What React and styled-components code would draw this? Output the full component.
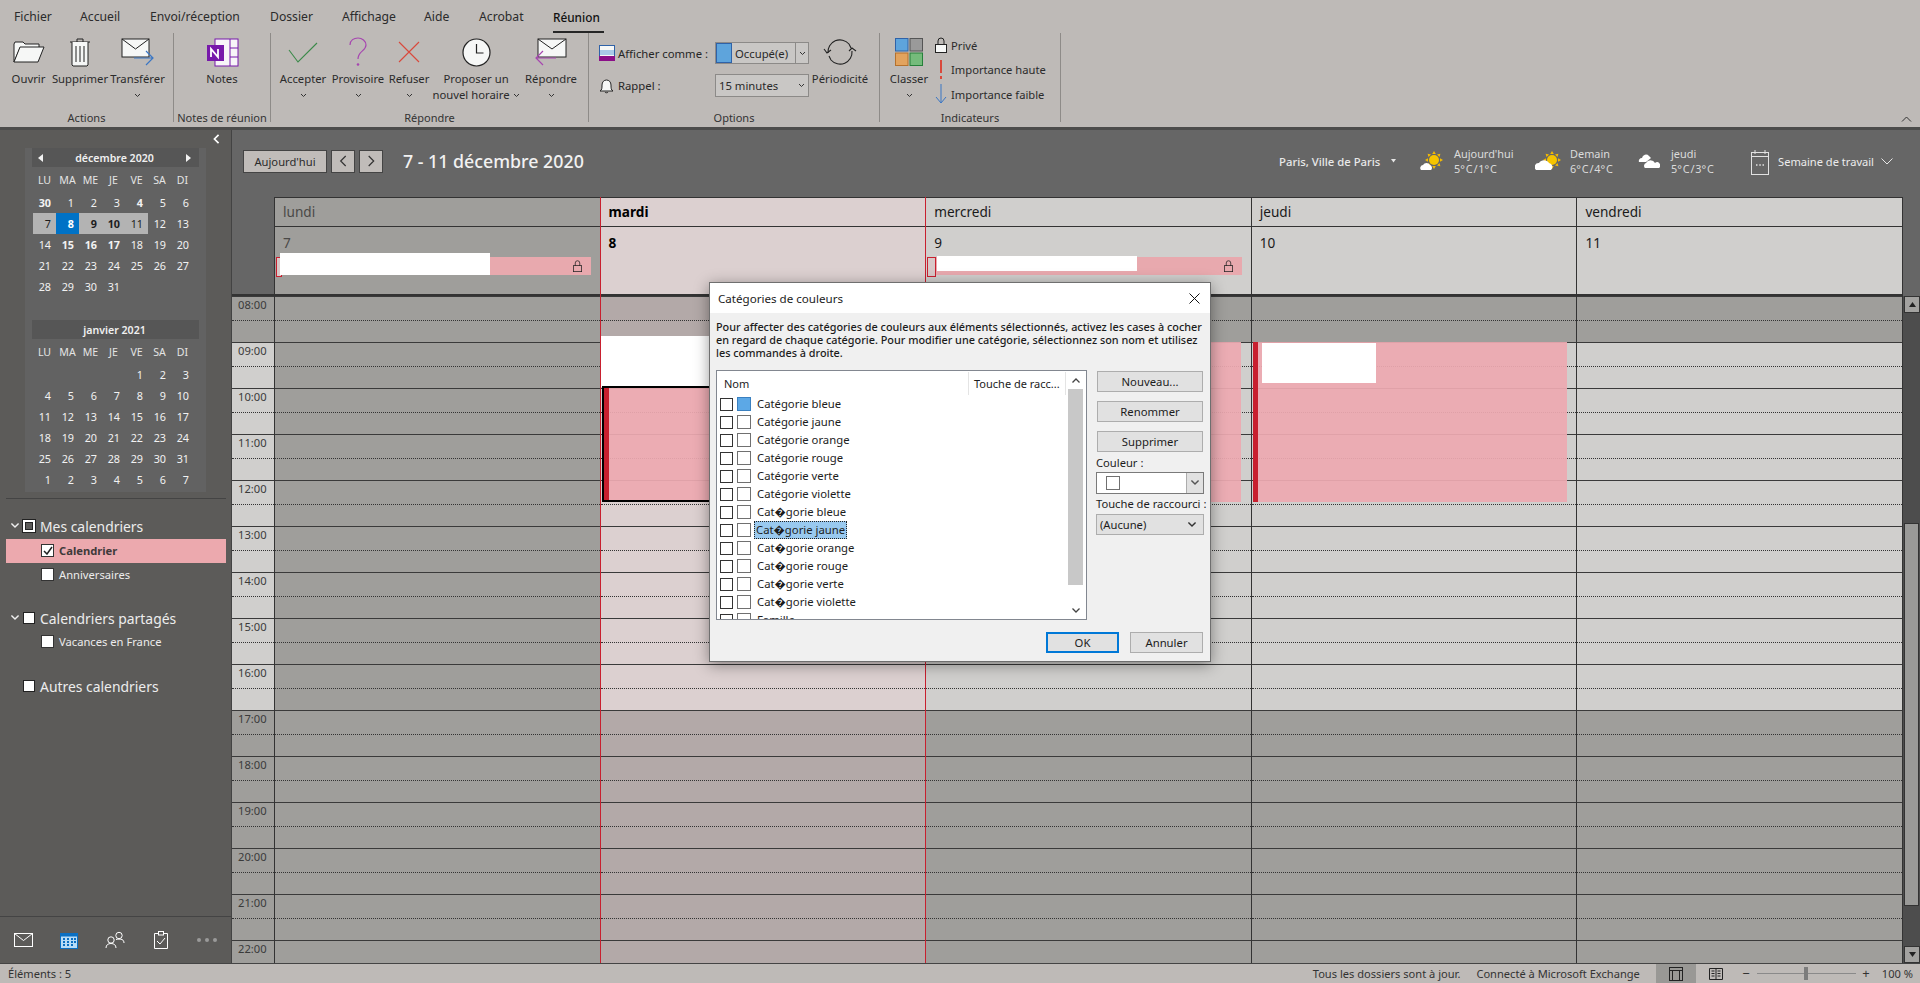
import React from 'react';
import styled, { createGlobalStyle } from 'styled-components';

const Global = createGlobalStyle`
  html, body { margin: 0; padding: 0; height: 100%; overflow: hidden; }
  body { font-family: "Noto Sans", "DejaVu Sans", sans-serif; font-size: 12px; color: #262626; }
  * { box-sizing: border-box; }
  svg { display: block; flex: none; }
`;

const Page = styled.div`position: relative; width: 1920px; height: 983px; display: flex; flex-direction: column; overflow: hidden;`;

/* ---------- ribbon ---------- */
const Ribbon = styled.header`position: relative; height: 130px; flex: none; background: #bebab7; border-bottom: 3px solid #4c4c4b;`;
const TabBar = styled.nav`height: 33px; display: flex; padding-left: 14px;`;
const Tab = styled.div`
  width: ${p => p.$w}px; height: 33px; line-height: 34px; font-size: 12.2px; white-space: nowrap; color: #2b2b2b;
  ${p => p.$active && `
    flex: none; width: 51px; color: #111; font-weight: 500; font-size: 11.8px; border-bottom: 2px solid #262626;
  `}
`;
const Groups = styled.div`display: flex; height: 89px;`;
const Group = styled.section`
  width: ${p => p.$w}px; height: 89px; flex: none; display: flex; flex-direction: column; border-right: 1px solid #8e8b88;
`;
const GroupBody = styled.div`flex: 1; display: flex; padding-left: ${p => p.$pad || 0}px; min-height: 0;`;
const GroupLabel = styled.div`height: 14px; line-height: 14px; margin-bottom: -3px; text-align: center; font-size: 11px; color: #333; white-space: nowrap;`;
const RibbonButton = styled.div`
  width: ${p => p.$w}px; flex: none; display: flex; flex-direction: column; align-items: center; padding-top: 3px; font-size: 11.3px; line-height: 16px; white-space: nowrap; color: #2b2b2b;
`;
const IconSlot = styled.div`height: 32px; margin-bottom: 3px; display: flex; align-items: center; justify-content: center;`;
const Caret = styled.div`height: 16px; display: flex; align-items: center; justify-content: center;`;
const InlineCaret = styled.span`display: inline-block; vertical-align: 1px; margin-left: 3px;`;
const OptionsGrid = styled.div`
  display: grid; grid-template-columns: 19px 97px 94px; grid-template-rows: 22px 23px; row-gap: 10px; padding: 9px 0 0 10px; align-items: center; font-size: 11.3px; white-space: nowrap;
`;
const RibbonSelect = styled.div`
  height: ${p => p.$h || 22}px; display: flex; align-items: center; border: 1px solid #8c8a88; background: #c9c7c5; font-size: 11.3px; color: #2a2a2a; padding-right: 3px;
`;
const Swatch = styled.span`width: 16px; height: 20px; background: #5ea4dc; border: 1px solid #2f62a8; flex: none; margin-right: 3px;`;
const SelectArrowCell = styled.span`margin-left: auto; height: 100%; width: 13px; display: flex; align-items: center; justify-content: center; border-left: 1px solid #8c8a88; margin-right: -3px;`;
const SelectArrow = styled.span`margin-left: auto;`;
const PadText = styled.span`padding-left: 3px;`;
const IndicatorList = styled.div`display: flex; flex-direction: column; margin-left: 3px;`;
const IndicatorRow = styled.div`height: 24.5px; display: flex; align-items: center; font-size: 11.2px; white-space: nowrap; color: #2b2b2b;`;
const IndicatorIcon = styled.span`width: 16px; display: flex; justify-content: flex-start;`;
const RibbonCollapse = styled.div`position: absolute; right: 8px; top: 116px;`;

/* ---------- layout ---------- */
const Main = styled.div`flex: 1; display: flex; min-height: 0;`;
const Sidebar = styled.aside`width: 232px; flex: none; display: flex; flex-direction: column; background: #5c5b59; border-right: 1px solid #434343;`;
const Collapse = styled.div`height: 18px; display: flex; justify-content: flex-end; align-items: center; padding-right: 11px;`;
const MiniPanel = styled.div`margin: 0 25px; width: 181px; height: 344px; padding: 0 7px; background: #626262; flex: none;`;
const MonthHead = styled.div`
  height: 19px; margin-top: ${p => p.$mt || 0}px; display: flex; align-items: center; justify-content: space-between; padding: 0 8px 0 6px; background: #565656; color: #f0f0f0; font-weight: 600; font-size: 10.6px;
`;
const MonthName = styled.span`flex: 1; text-align: center;`;
const WeekHead = styled.div`display: grid; grid-template-columns: repeat(7, 23px); height: 25px; align-items: center; margin-left: 1px; color: #e4e4e4; font-size: 10.6px;`;
const WeekHeadCell = styled.span`text-align: center;`;
const DayGrid = styled.div`display: grid; grid-template-columns: repeat(7, 23px); grid-auto-rows: 21px; margin-left: 1px;`;
const Day = styled.span`
  height: 21px; line-height: 21px; text-align: right; padding-right: 5px; font-size: 10.8px; color: #f2f2f2;
  font-weight: ${p => (p.$bold ? 700 : 400)};
  ${p => p.$tone === 'range' && 'background: #b3b3b3; color: #1d1d1d;'}
  ${p => p.$tone === 'today' && 'background: #0072c6; color: #fff;'}
`;
const Divider = styled.div`height: 1px; margin: 6px 6px 0; width: 220px; background: #444; flex: none;`;
const FolderHead = styled.div`
  height: 24px; margin-top: ${p => p.$mt || 0}px; display: flex; align-items: center; color: #ededed; font-size: 13.9px; padding-left: ${p => p.$pl || 10}px; flex: none; white-space: nowrap;
`;
const ChevronBox = styled.span`width: 13px; display: flex;`;
const FolderCheck = styled.span`
  width: 12px; height: 12px; flex: none; margin-right: 5px; background: #fff; border: 1px solid #222;
  ${p => p.$boxed && 'background: #5c5b59; border: 2px solid #fff; box-shadow: 0 0 0 1px #222, inset 0 0 0 1px #222;'}
`;
const CalRow = styled.div`
  height: 24px; margin: 0 6px; width: 220px; flex: none; padding: 0 0 1px 35px; display: flex; align-items: center; gap: 5px; font-size: 11.2px; white-space: nowrap;
  color: ${p => (p.$active ? '#3f3a3a' : '#ececec')}; font-weight: ${p => (p.$active ? 700 : 400)};
  background: ${p => (p.$active ? '#eca9ae' : 'transparent')};
  ${p => p.$active && 'margin-top: 1px;'}
`;
const CalCheck = styled.span`width: 13px; height: 13px; flex: none; background: #fff; border: 1px solid #333; display: flex; align-items: center; justify-content: center;`;
const BottomNav = styled.div`margin-top: auto; height: 47px; flex: none; border-top: 1px solid #444; display: grid; grid-template-columns: 46px 46px 46px 46px 46px; padding-bottom: 1px; align-items: center; justify-items: center;`;

/* ---------- content ---------- */
const Content = styled.main`flex: 1; min-width: 0; display: flex; flex-direction: column; background: #666;`;
const Toolbar = styled.div`height: 67px; flex: none; display: flex; align-items: center; padding: 0 27px 5px 11px;`;
const ToolBtn = styled.div`
  width: ${p => p.$w}px; height: 23px; margin-right: 4px; display: flex; align-items: center; justify-content: center; background: #c0bcb9; border: 1px solid #444; font-size: 11.2px; color: #2b2b2b;
`;
const Title = styled.h1`margin: 0 0 0 16px; font-size: 17.8px; font-weight: 500; color: #f2f2f2; white-space: nowrap;`;
const ToolRight = styled.div`margin-left: auto; display: flex; align-items: center; color: #e2e2e2;`;
const Location = styled.div`width: 141px; display: flex; align-items: center; gap: 11px; font-size: 11.3px; font-weight: 500; white-space: nowrap; color: #e9e9e9;`;
const Forecast = styled.div`width: ${p => p.$w}px; display: flex; align-items: center; gap: ${p => p.$gap}px;`;
const ForecastText = styled.div`display: flex; flex-direction: column; font-size: 10.9px; line-height: 15px; white-space: nowrap; color: #dcdcdc; word-spacing: -2px;`;
const ViewSwitch = styled.div`display: flex; align-items: center; gap: 9px; font-size: 11.1px; white-space: nowrap; color: #ececec;`;
const ViewChevron = styled.span`margin-left: -2px;`;

const Board = styled.div`flex: 1; display: flex; min-height: 0;`;
const Week = styled.div`flex: 1; min-width: 0; display: grid; grid-template-columns: 43px repeat(5, 1fr); overflow: hidden;`;
const TimeCol = styled.div`display: flex; flex-direction: column; border-right: 1px solid #333;`;
const TimeHead = styled.div`height: 99px; flex: none; border-bottom: 2px solid #333;`;
const DayCol = styled.div`
  position: relative; display: flex; flex-direction: column; min-width: 0;
  border-right: 1px solid ${p => (p.$redEdge ? '#c8202f' : '#333')};
`;
const WeekdayCell = styled.div`
  height: 30px; flex: none; padding-left: 8px; line-height: 28px; font-size: 13.6px;
  border-top: 1px solid #333; border-bottom: 1px solid #333;
  background: ${p => p.$bg}; color: ${p => p.$fg}; font-weight: ${p => (p.$today ? 700 : 400)};
`;
const DateCell = styled.div`
  height: 69px; flex: none; padding: 6px 0 0 8px; line-height: 20px; font-size: 13.6px;
  border-bottom: 2px solid #333;
  background: ${p => p.$bg}; color: ${p => p.$fg}; font-weight: ${p => (p.$today ? 700 : 400)};
`;
const Slot = styled.div`
  position: relative; height: 46px; flex: none; background: ${p => p.$bg};
  &:not(:first-of-type) { border-top: 1px solid #3a3a3a; }
  &::after { content: ''; position: absolute; left: 0; right: 0; top: 23px; border-top: 1px dotted #333; }
`;
const HourLabel = styled.span`position: relative; display: block; padding-left: 6px; line-height: 16px; font-size: 11.2px; color: #3a3a3a;`;
const AllDay = styled.div`
  position: absolute; left: 1px; top: 60px; width: 315px; height: 18px; background: #e8a9ae;
  &::before { content: ''; position: absolute; left: 0; top: 0; width: ${p => p.$mark}px; height: 18px; border: 1px solid #c8202f; background: #d8c8c8; }
`;
const LockSpot = styled.span`position: absolute; right: 8px; top: 3px;`;
const Redact = styled.div`
  position: absolute; left: ${p => p.$l}px; top: ${p => p.$t}px; width: ${p => p.$w}px; height: ${p => p.$h}px; background: #fff;
`;
const TimedEvent = styled.div`
  position: absolute; left: 1px; top: ${p => p.$t}px; width: ${p => p.$w}px; height: ${p => p.$h}px; background: rgba(237, 169, 176, .93);
  ${p => p.$sel && 'border: 2px solid #000;'}
  &::before { content: ''; position: absolute; left: 0; top: 0; bottom: 0; width: 5px; background: #c8202f; }
`;
const Scroll = styled.div`width: 17px; flex: none; margin-top: 99px; padding-left: 1px; background: #4d4d4d; display: flex; flex-direction: column;`;
const ScrollBtn = styled.div`width: 16px; height: 17px; flex: none; background: #a3a2a0; border: 1px solid #333; display: flex; align-items: center; justify-content: center; ${p => p.$end && 'margin-top: auto;'}`;
const ScrollThumb = styled.div`height: 383px; flex: none; margin-top: 210px; width: 15px; background: #9a9a98; border: 1px solid #333;`;

/* ---------- status bar ---------- */
const Status = styled.footer`height: 20px; flex: none; background: #bebab7; border-top: 1px solid #444; display: flex; align-items: center; padding: 0 7px 0 8px; font-size: 11.1px; color: #333; white-space: nowrap;`;
const StatusRight = styled.div`margin-left: auto; display: flex; align-items: center; height: 100%;`;
const StatusText = styled.span`margin-right: 16px;`;
const ViewBtn = styled.span`width: 40px; height: 100%; display: flex; align-items: center; justify-content: center; background: ${p => (p.$on ? '#999895' : 'transparent')}; margin-right: ${p => p.$mr || 0}px;`;
const ZoomSlider = styled.div`position: relative; width: 99px; height: 1px; margin: 0 4px 0 5px; background: #8a8a8a;
  &::after { content: ''; position: absolute; left: 47px; top: -6px; width: 4px; height: 13px; background: #7c7c7c; }
`;
const ZoomSign = styled.span`width: 12px; font-size: 13px; text-align: center; line-height: 13px;`;
const ZoomText = styled.span`margin-left: 10px;`;

/* ---------- dialog ---------- */
const Dialog = styled.div`
  position: absolute; left: 709px; top: 282px; width: 502px; height: 380px; background: #f0f0f0; border: 1px solid #6f6f6f; box-shadow: 0 3px 14px rgba(0,0,0,.4); display: flex; flex-direction: column; font-size: 11.4px; color: #1c1c1c;
`;
const DialogTitle = styled.div`height: 30px; flex: none; background: #fff; display: flex; align-items: center; justify-content: space-between; padding: 0 10px 0 8px; font-size: 11.6px;`;
const DialogText = styled.p`margin: 7px 0 0; padding: 0 6px; line-height: 13px; height: 39px; font-size: 10.85px; font-weight: 500; white-space: pre-line; flex: none;`;
const DialogBody = styled.div`display: flex; margin-top: 11px; padding-left: 6px; flex: none;`;
const ListBox = styled.div`width: 371px; height: 250px; background: #fff; border: 1px solid #828790; display: flex; overflow: hidden; flex: none;`;
const ListMain = styled.div`flex: 1; min-width: 0; display: flex; flex-direction: column;`;
const ListHead = styled.div`height: 24px; flex: none; padding-top: 1px; display: grid; grid-template-columns: 251px 1fr; align-items: center; font-size: 11px;`;
const HeadCell = styled.span`padding-left: 7px; height: 23px; line-height: 23px; white-space: nowrap; ${p => p.$sep && 'border-left: 1px solid #e4e4e4; border-right: 1px solid #e4e4e4; padding-left: 5px;'}`;
const CatRow = styled.div`height: 18px; flex: none; display: flex; align-items: center; padding-left: 3px; font-size: 11.3px; white-space: nowrap;`;
const CatCheck = styled.span`width: 13px; height: 13px; flex: none; border: 1px solid #333; background: #fff; margin-right: 4px;`;
const CatSwatch = styled.span`width: 14px; height: 14px; flex: none; margin-right: 4px; border: 1px solid ${p => (p.$blue ? '#3a80c0' : '#707070')}; background: ${p => (p.$blue ? '#5ca8e6' : '#fff')};`;
const CatName = styled.span`height: 18px; line-height: 16px; padding: 0 1px; ${p => p.$sel ? 'background: #99c9ef; border: 1px dotted #222; margin-left: -1px;' : 'border: 1px solid transparent;'}`;
const ListScroll = styled.div`width: 17px; flex: none; margin-left: 1px; background: #fff; display: flex; flex-direction: column; align-items: center; margin-right: 2px;`;
const ArrowCell = styled.span`height: 18px; flex: none; display: flex; align-items: center; justify-content: center; ${p => p.$end && 'margin-top: auto;'}`;
const ListThumb = styled.span`height: 196px; width: 15px; background: #c8c8c8; flex: none;`;
const SideCol = styled.div`width: 108px; margin-left: 10px; display: flex; flex-direction: column; flex: none; padding-top: 1px;`;
const DlgBtn = styled.div`
  width: ${p => p.$w || 106}px; height: 21px; flex: none; margin-bottom: ${p => p.$mb || 0}px; display: flex; align-items: center; justify-content: center; background: #e1e1e1; border: ${p => (p.$primary ? '2px solid #0078d7' : '1px solid #adadad')}; font-size: 11.3px;
`;
const FieldLabel = styled.div`height: 13px; line-height: 13px; margin: ${p => p.$m}; font-size: 11.2px; white-space: nowrap;`;
const ColorSelect = styled.div`height: 22px; width: 108px; flex: none; margin-left: -1px; border: 1px solid #7a7a7a; background: #fff; display: flex; align-items: center; padding-left: 9px;`;
const ColorChip = styled.span`width: 14px; height: 14px; border: 1px solid #707070; background: #fff;`;
const ColorArrow = styled.span`margin-left: auto; width: 17px; height: 100%; background: #e1e1e1; border-left: 1px solid #adadad; display: flex; align-items: center; justify-content: center;`;
const KeySelect = styled.div`height: 21px; width: 108px; flex: none; margin-left: -1px; border: 1px solid #adadad; background: #e1e1e1; display: flex; align-items: center; justify-content: space-between; padding: 0 6px 0 3px; font-size: 11.2px;`;
const DialogFooter = styled.div`display: flex; justify-content: flex-end; gap: 11px; margin-top: 12px; padding-right: 7px; flex: none;`;

/* ---------- icons ---------- */
const Chev = ({ c = '#333', w = 7 }) => <svg width={w} height={(w * 5) / 7} viewBox="0 0 7 5"><path d="M1 1l2.500 2.500L6 1" fill="none" stroke={c} strokeWidth="1" /></svg>;
const Folder = () => <svg width="32" height="22" viewBox="0 0 32 22"><path d="M1 21V3l1-2h8l2 2h14v4H7L1 21z" fill="#f6f7f6" stroke="#222" /><path d="M1 21L7 6h24l-6 15z" fill="#f6f7f6" stroke="#222" /></svg>;
const Trash = () => <svg width="22" height="30" viewBox="0 0 22 30"><path d="M1 5h20M8 5V2h6v3" fill="none" stroke="#222" /><path d="M3 5v23l1 1h14l1-1V5" fill="#f6f7f6" stroke="#222" /><path d="M7 9v16M11 9v16M15 9v16" stroke="#222" /></svg>;
const MailOut = () => <svg width="34" height="28" viewBox="0 0 34 28"><rect x="1" y="1" width="27" height="18" fill="#f6f7f6" stroke="#222" /><path d="M1 1l13.500 10L28 1" fill="none" stroke="#222" /><path d="M13 20h19M25 13l7 7-7 7" fill="none" stroke="#3a76c4" strokeWidth="1.200" /></svg>;
const OneNote = () => <svg width="33" height="29" viewBox="0 0 33 29"><rect x="9" y="1" width="23" height="27" fill="#f7f5f8" stroke="#7719aa" /><path d="M24 1v27M24 10h8M24 19h8" stroke="#7719aa" /><rect x="1" y="7" width="17" height="16" fill="#7719aa" /><path d="M5 19v-8l7 8v-8" fill="none" stroke="#fff" strokeWidth="1.800" /></svg>;
const Check = () => <svg width="30" height="21" viewBox="0 0 30 21"><path d="M1 8l9 12L29 1" fill="none" stroke="#3b8a4a" strokeWidth="1.100" /></svg>;
const Question = () => <svg width="18" height="30" viewBox="0 0 18 30"><path d="M1 8C1 3 5 1 9 1s8 3 8 7c0 6-8 6-8 14" fill="none" stroke="#a646b0" strokeWidth="1.200" /><circle cx="9" cy="27.500" r="1.300" fill="#a646b0" /></svg>;
const Cross = () => <svg width="22" height="22" viewBox="0 0 22 22"><path d="M1 1l20 20M21 1L1 21" stroke="#d9483b" strokeWidth="1.100" /></svg>;
const Clock = () => <svg width="29" height="29" viewBox="0 0 29 29"><circle cx="14.500" cy="14.500" r="13.500" fill="#f6f7f6" stroke="#222" strokeWidth="1.200" /><path d="M14.500 6v9h7" fill="none" stroke="#222" strokeWidth="1.200" /></svg>;
const MailReply = () => <svg width="32" height="28" viewBox="0 0 32 28"><rect x="3" y="1" width="28" height="18" fill="#f6f7f6" stroke="#222" /><path d="M3 1l14 10L31 1" fill="none" stroke="#222" /><path d="M21 20H1M8 13l-7 7 7 7" fill="none" stroke="#a646b0" strokeWidth="1.200" /></svg>;
const ShowAs = () => <svg width="16" height="16" viewBox="0 0 16 16"><rect x=".5" y=".5" width="15" height="15" fill="#f6f7f6" stroke="#2f62a8" /><rect x="1" y="5" width="14" height="5" fill="#a9c8e8" /><rect y="11" width="16" height="5" fill="#8b0f88" /></svg>;
const Bell = ({ s = 16 }) => <svg width={s - 1} height={s} viewBox="0 0 15 16"><path d="M1 13c2-1 2-3 2-6 0-3 2-5 4.500-5S12 4 12 7c0 3 0 5 2 6z" fill="#f6f7f6" stroke="#222" /><path d="M6 14c0 1 3 1 3 0" fill="none" stroke="#222" /></svg>;
const Recur = () => <svg width="34" height="28" viewBox="0 0 34 28"><path d="M5 15A12 12 0 0 1 26 6l2 4" fill="none" stroke="#222" strokeWidth="1.100" /><path d="M29 13A12 12 0 0 1 8 22l-2-4" fill="none" stroke="#222" strokeWidth="1.100" /><path d="M1 11l3 4 4-3M33 13l-4-3-3 3" fill="none" stroke="#222" strokeWidth="1.100" /></svg>;
const Lock = ({ w = 12, h = 16, fill = '#f6f7f6', c = '#222' }) => <svg width={w} height={h} viewBox="0 0 12 16"><path d="M3 8V4a3 3 0 0 1 6 0v4" fill="none" stroke={c} /><rect x=".5" y="7.500" width="11" height="8" fill={fill} stroke={c} /></svg>;
const Categorize = () => <svg width="28" height="28" viewBox="0 0 28 28"><rect x=".5" y=".5" width="12.500" height="12.500" fill="#5ea4dc" stroke="#2f62a8" /><rect x="15" y=".5" width="12.500" height="12.500" fill="#9a9a9a" stroke="#555" /><rect x=".5" y="15" width="12.500" height="12.500" fill="#e2a35e" stroke="#b5712c" /><rect x="15" y="15" width="12.500" height="12.500" fill="#75bb7b" stroke="#26803a" /></svg>;
const Bang = () => <svg width="12" height="20" viewBox="0 0 12 20"><rect x="5" y="0" width="2" height="13" fill="#d9483b" /><rect x="5" y="16" width="2" height="3" fill="#d9483b" /></svg>;
const ArrowDown = () => <svg width="12" height="20" viewBox="0 0 12 20"><path d="M6 0v19M1 13l5 6 5-6" fill="none" stroke="#3a76c4" /></svg>;
const Tri = ({ dir = 'up', c = '#222', w = 7 }) => <svg width={w} height={(w * 5) / 7} viewBox="0 0 7 5"><path d={dir === 'up' ? 'M0 5l3.500-5L7 5z' : 'M0 0l3.500 5L7 0z'} fill={c} /></svg>;
const TriSide = ({ right }) => <svg width="5" height="8" viewBox="0 0 5 8"><path d={right ? 'M0 0l5 4-5 4z' : 'M5 0L0 4l5 4z'} fill="#f2f2f2" /></svg>;
const Angle = ({ right, c = '#333', s = 12, sw = 1.2 }) => <svg width={s * .7} height={s} viewBox="0 0 7 12"><path d={right ? 'M1 1l5 5-5 5' : 'M6 1L1 6l5 5'} fill="none" stroke={c} strokeWidth={sw} /></svg>;
const Close = () => <svg width="11" height="11" viewBox="0 0 11 11"><path d="M.5.5l10 10M10.500.5l-10 10" stroke="#111" /></svg>;
const Ticks = () => <svg width="10" height="9" viewBox="0 0 10 9"><path d="M1 5l3 3 5-7" fill="none" stroke="#222" strokeWidth="1.500" /></svg>;
const NavMail = () => <svg width="19" height="14" viewBox="0 0 19 14"><rect x=".5" y=".5" width="18" height="13" fill="none" stroke="#fff" /><path d="M.5.5l9 7 9-7" fill="none" stroke="#fff" /></svg>;
const NavCal = () => <svg width="18" height="18" viewBox="0 0 18 18"><rect x=".5" y="2.500" width="17" height="15" fill="#b7dcf7" stroke="#0a6fc2" /><rect y="2" width="18" height="3.500" fill="#0a6fc2" /><path d="M3 7h2v2H3zM7 7h2v2H7zM11 7h2v2h-2zM14 7h2v2h-2zM3 10h2v2H3zM7 10h2v2H7zM11 10h2v2h-2zM14 10h2v2h-2zM3 13h2v2H3zM7 13h2v2H7zM11 13h2v2h-2z" fill="#0a6fc2" /></svg>;
const NavPeople = () => <svg width="20" height="18" viewBox="0 0 20 18"><circle cx="6" cy="9" r="3.200" fill="none" stroke="#fff" /><path d="M1 17c0-3 2-4.500 5-4.500s5 1.500 5 4.500" fill="none" stroke="#fff" /><circle cx="14" cy="4.500" r="3.200" fill="none" stroke="#fff" /><path d="M11 8.500c1-.500 5-.500 6 0 1.500.700 2 2 2 3.500" fill="none" stroke="#fff" /></svg>;
const NavTasks = () => <svg width="14" height="18" viewBox="0 0 14 18"><path d="M4 2.500H.5v15h13v-15H10" fill="none" stroke="#fff" /><rect x="4.500" y=".5" width="5" height="3.500" fill="none" stroke="#fff" /><path d="M3 10l3 3 5-6" fill="none" stroke="#fff" /></svg>;
const NavDots = () => <svg width="20" height="4" viewBox="0 0 20 4"><circle cx="2" cy="2" r="2" fill="#9a9a9a" /><circle cx="10" cy="2" r="2" fill="#9a9a9a" /><circle cx="18" cy="2" r="2" fill="#9a9a9a" /></svg>;
const Sun = ({ x = 14, y = 10 }) => (
  <g>
    {[0, 45, 90, 135, 180, 225, 270, 315].map(a => <path key={a} d={`M${x} ${y - 9}l1.800 3h-3.600z`} fill="#f5bb00" transform={`rotate(${a} ${x} ${y})`} />)}
    <circle cx={x} cy={y} r="5" fill="#f5c400" />
  </g>
);
const WeatherToday = () => <svg width="24" height="22" viewBox="0 0 24 22"><Sun x={14} y={10} /><path d="M1 20a3 3 0 0 1 2-5 4 4 0 0 1 7 0 3 3 0 0 1 1 5z" fill="#fff" /></svg>;
const WeatherTomorrow = () => <svg width="27" height="22" viewBox="0 0 27 22"><Sun x={17} y={10} /><path d="M1 20a4 4 0 0 1 3-7 6 6 0 0 1 10 0 4 4 0 0 1 2 7z" fill="#fff" /></svg>;
const WeatherCloud = () => <svg width="22" height="16" viewBox="0 0 22 16"><path d="M1 9a3 3 0 0 1 3-4 4 4 0 0 1 7-2l2 2-5 4z" fill="#fff" /><path d="M7 15a3 3 0 0 1 1-5 5 5 0 0 1 9 0 3 3 0 0 1 4 5z" fill="#fff" /></svg>;
const WeekIcon = () => <svg width="18" height="27" viewBox="0 0 18 27"><rect x=".5" y="4.500" width="17" height="22" fill="none" stroke="#e2e2e2" /><path d="M0 8.500h18M4 2v4M14 2v4" stroke="#e2e2e2" /><path d="M5 17h1.500M8.300 17h1.500M11.500 17H13" stroke="#e2e2e2" strokeWidth="1.500" /></svg>;
const ViewNormal = () => <svg width="14" height="14" viewBox="0 0 14 14"><rect x=".5" y=".5" width="13" height="13" fill="none" stroke="#222" /><path d="M0 3.500h14M3.500 3.500V14M10.500 3.500V14" stroke="#222" /></svg>;
const ViewRead = () => <svg width="14" height="14" viewBox="0 0 14 14"><path d="M.5 1.500h13v11h-13zM7 1.500v11M2.500 4h3M2.500 6.500h3M2.500 9h3M8.500 4h3M8.500 6.500h3M8.500 9h3" fill="none" stroke="#222" /></svg>;

/* ---------- data ---------- */
const tabs = [['Fichier', 66], ['Accueil', 70], ['Envoi/réception', 120], ['Dossier', 72], ['Affichage', 82], ['Aide', 55], ['Acrobat', 74]];
const weekLabels = ['LU', 'MA', 'ME', 'JE', 'VE', 'SA', 'DI'];
const december = [30, 1, 2, 3, 4, 5, 6, 7, 8, 9, 10, 11, 12, 13, 14, 15, 16, 17, 18, 19, 20, 21, 22, 23, 24, 25, 26, 27, 28, 29, 30, 31, ...Array(10).fill('')];
const january = ['', '', '', '', 1, 2, 3, ...Array.from({ length: 28 }, (_, i) => i + 4), 1, 2, 3, 4, 5, 6, 7];
const decBold = new Set([0, 4, 8, 9, 10, 15, 16, 17]);
const hours = ['08:00', '09:00', '10:00', '11:00', '12:00', '13:00', '14:00', '15:00', '16:00', '17:00', '18:00', '19:00', '20:00', '21:00', '22:00'];
const categories = ['Catégorie bleue', 'Catégorie jaune', 'Catégorie orange', 'Catégorie rouge', 'Catégorie verte', 'Catégorie violette', 'Cat\uFFFDgorie bleue', 'Cat\uFFFDgorie jaune', 'Cat\uFFFDgorie orange', 'Cat\uFFFDgorie rouge', 'Cat\uFFFDgorie verte', 'Cat\uFFFDgorie violette', 'Famille'];
const isWork = i => i >= 1 && i <= 8;
const dayDefs = [
  { name: 'lundi', date: '7', redEdge: true, bg: '#9f9e9b', fg: '#4a4947', slot: () => '#9f9e9b' },
  { name: 'mardi', date: '8', today: true, redEdge: true, bg: '#dcd0d0', fg: '#000', slot: i => (isWork(i) ? '#dcd0d0' : '#b3a9a8') },
  { name: 'mercredi', date: '9', bg: '#d0cfcd', fg: '#1a1a1a', slot: i => (isWork(i) ? '#d0cfcd' : '#9f9e9b') },
  { name: 'jeudi', date: '10', bg: '#d0cfcd', fg: '#1a1a1a', slot: i => (isWork(i) ? '#d0cfcd' : '#9f9e9b') },
  { name: 'vendredi', date: '11', bg: '#d0cfcd', fg: '#1a1a1a', slot: i => (isWork(i) ? '#d0cfcd' : '#9f9e9b') },
];

const RBtn = ({ w, icon, label, line2, caret }) => (
  <RibbonButton $w={w}>
    <IconSlot>{icon}</IconSlot>
    <span>{label}</span>
    {line2 ? <span>{line2}<InlineCaret><Chev /></InlineCaret></span> : caret && <Caret><Chev /></Caret>}
  </RibbonButton>
);

const MiniMonth = ({ name, nav, mt, days, bold, tone }) => (
  <>
    <MonthHead $mt={mt}>
      {nav && <TriSide />}
      <MonthName>{name}</MonthName>
      {nav && <TriSide right />}
    </MonthHead>
    <WeekHead>{weekLabels.map(l => <WeekHeadCell key={l}>{l}</WeekHeadCell>)}</WeekHead>
    <DayGrid>
      {days.map((d, i) => <Day key={i} $bold={bold && bold.has(i)} $tone={tone && tone(i)}>{d}</Day>)}
    </DayGrid>
  </>
);

export default function App() {
  return (
    <Page>
      <Global />
      <Ribbon>
        <TabBar>
          {tabs.map(([t, w]) => <Tab key={t} $w={w}>{t}</Tab>)}
          <Tab $active>Réunion</Tab>
        </TabBar>
        <Groups>
          <Group $w={174}>
            <GroupBody $pad={4}>
              <RBtn w={49} icon={<Folder />} label="Ouvrir" />
              <RBtn w={54} icon={<Trash />} label="Supprimer" />
              <RBtn w={61} icon={<MailOut />} label="Transférer" caret />
            </GroupBody>
            <GroupLabel>Actions</GroupLabel>
          </Group>
          <Group $w={97}>
            <GroupBody><RBtn w={96} icon={<OneNote />} label="Notes" /></GroupBody>
            <GroupLabel>Notes de réunion</GroupLabel>
          </Group>
          <Group $w={318}>
            <GroupBody $pad={6}>
              <RBtn w={52} icon={<Check />} label="Accepter" caret />
              <RBtn w={58} icon={<Question />} label="Provisoire" caret />
              <RBtn w={44} icon={<Cross />} label="Refuser" caret />
              <RBtn w={90} icon={<Clock />} label="Proposer un" line2="nouvel horaire" />
              <RBtn w={60} icon={<MailReply />} label="Répondre" caret />
            </GroupBody>
            <GroupLabel>Répondre</GroupLabel>
          </Group>
          <Group $w={291}>
            <GroupBody>
              <OptionsGrid>
                <ShowAs />
                <span>Afficher comme :</span>
                <RibbonSelect><Swatch /><span>Occupé(e)</span><SelectArrowCell><Chev /></SelectArrowCell></RibbonSelect>
                <Bell />
                <span>Rappel :</span>
                <RibbonSelect $h={23}><PadText>15 minutes</PadText><SelectArrow><Chev /></SelectArrow></RibbonSelect>
              </OptionsGrid>
              <RBtn w={62} icon={<Recur />} label="Périodicité" />
            </GroupBody>
            <GroupLabel>Options</GroupLabel>
          </Group>
          <Group $w={181}>
            <GroupBody $pad={6}>
              <RBtn w={46} icon={<Categorize />} label="Classer" caret />
              <IndicatorList>
                <IndicatorRow><IndicatorIcon><Lock /></IndicatorIcon>Privé</IndicatorRow>
                <IndicatorRow><IndicatorIcon><Bang /></IndicatorIcon>Importance haute</IndicatorRow>
                <IndicatorRow><IndicatorIcon><ArrowDown /></IndicatorIcon>Importance faible</IndicatorRow>
              </IndicatorList>
            </GroupBody>
            <GroupLabel>Indicateurs</GroupLabel>
          </Group>
        </Groups>
        <RibbonCollapse><svg width="11" height="6" viewBox="0 0 11 6"><path d="M1 5.500l4.500-4.500 4.500 4.500" fill="none" stroke="#333" /></svg></RibbonCollapse>
      </Ribbon>

      <Main>
        <Sidebar>
          <Collapse><Angle c="#fff" s={10} sw={2} /></Collapse>
          <MiniPanel>
            <MiniMonth
              name="décembre 2020" nav days={december} bold={decBold}
              tone={i => (i === 8 ? 'today' : i >= 7 && i <= 11 ? 'range' : undefined)}
            />
            <MiniMonth name="janvier 2021" mt={2} days={january} />
          </MiniPanel>
          <Divider />
          <FolderHead $mt={15}>
            <ChevronBox><Chev c="#f0f0f0" w={10} /></ChevronBox>
            <FolderCheck $boxed />
            Mes calendriers
          </FolderHead>
          <CalRow $active><CalCheck><Ticks /></CalCheck>Calendrier</CalRow>
          <CalRow><CalCheck />Anniversaires</CalRow>
          <FolderHead $mt={19}>
            <ChevronBox><Chev c="#f0f0f0" w={10} /></ChevronBox>
            <FolderCheck />
            Calendriers partagés
          </FolderHead>
          <CalRow><CalCheck />Vacances en France</CalRow>
          <FolderHead $mt={20} $pl={23}>
            <FolderCheck />
            Autres calendriers
          </FolderHead>
          <BottomNav>
            <NavMail /><NavCal /><NavPeople /><NavTasks /><NavDots />
          </BottomNav>
        </Sidebar>

        <Content>
          <Toolbar>
            <ToolBtn $w={84}>Aujourd'hui</ToolBtn>
            <ToolBtn $w={24}><Angle /></ToolBtn>
            <ToolBtn $w={24}><Angle right /></ToolBtn>
            <Title>7 - 11 décembre 2020</Title>
            <ToolRight>
              <Location>Paris, Ville de Paris <Tri dir="down" c="#e6e6e6" w={5} /></Location>
              <Forecast $w={115} $gap={10}><WeatherToday /><ForecastText><span>Aujourd'hui</span><span>5° C / 1° C</span></ForecastText></Forecast>
              <Forecast $w={103} $gap={8}><WeatherTomorrow /><ForecastText><span>Demain</span><span>6° C / 4° C</span></ForecastText></Forecast>
              <Forecast $w={113} $gap={11}><WeatherCloud /><ForecastText><span>jeudi</span><span>5° C / 3° C</span></ForecastText></Forecast>
              <ViewSwitch>
                <WeekIcon />
                Semaine de travail
                <ViewChevron><svg width="12" height="7" viewBox="0 0 12 7"><path d="M.5.5l5.500 5.500 5.500-5.500" fill="none" stroke="#e6e6e6" /></svg></ViewChevron>
              </ViewSwitch>
            </ToolRight>
          </Toolbar>

          <Board>
            <Week>
              <TimeCol>
                <TimeHead />
                {hours.map((h, i) => (
                  <Slot key={h} $bg={isWork(i) ? '#d0cfcd' : '#9f9e9b'}><HourLabel>{h}</HourLabel></Slot>
                ))}
              </TimeCol>
              {dayDefs.map(d => (
                <DayCol key={d.name} $redEdge={d.redEdge}>
                  <WeekdayCell $bg={d.bg} $fg={d.fg} $today={d.today}>{d.name}</WeekdayCell>
                  <DateCell $bg={d.bg} $fg={d.fg} $today={d.today}>{d.date}</DateCell>
                  {hours.map((h, i) => <Slot key={h} $bg={d.slot(i)} />)}
                  {d.name === 'lundi' && (
                    <>
                      <AllDay $mark={4}><LockSpot><Lock w={11} h={12} fill="transparent" /></LockSpot></AllDay>
                      <Redact $l={5} $t={56} $w={210} $h={22} />
                    </>
                  )}
                  {d.name === 'mardi' && (
                    <>
                      <Redact $l={0} $t={139} $w={108} $h={51} />
                      <TimedEvent $sel $t={189} $w={322} $h={116} />
                    </>
                  )}
                  {d.name === 'mercredi' && (
                    <>
                      <AllDay $mark={7}><LockSpot><Lock w={11} h={12} fill="transparent" /></LockSpot></AllDay>
                      <Redact $l={11} $t={59} $w={200} $h={15} />
                      <TimedEvent $t={145} $w={314} $h={160} />
                    </>
                  )}
                  {d.name === 'jeudi' && (
                    <>
                      <TimedEvent $t={145} $w={314} $h={160} />
                      <Redact $l={10} $t={146} $w={114} $h={40} />
                    </>
                  )}
                </DayCol>
              ))}
            </Week>
            <Scroll>
              <ScrollBtn><Tri dir="up" /></ScrollBtn>
              <ScrollThumb />
              <ScrollBtn $end><Tri dir="down" /></ScrollBtn>
            </Scroll>
          </Board>
        </Content>
      </Main>

      <Status>
        Éléments : 5
        <StatusRight>
          <StatusText>Tous les dossiers sont à jour.</StatusText>
          <StatusText>Connecté à Microsoft Exchange</StatusText>
          <ViewBtn $on><ViewNormal /></ViewBtn>
          <ViewBtn $mr={4}><ViewRead /></ViewBtn>
          <ZoomSign>−</ZoomSign>
          <ZoomSlider />
          <ZoomSign>+</ZoomSign>
          <ZoomText>100 %</ZoomText>
        </StatusRight>
      </Status>

      <Dialog>
        <DialogTitle>Catégories de couleurs<Close /></DialogTitle>
        <DialogText>{'Pour affecter des catégories de couleurs aux éléments sélectionnés, activez les cases à cocher\nen regard de chaque catégorie. Pour modifier une catégorie, sélectionnez son nom et utilisez\nles commandes à droite.'}</DialogText>
        <DialogBody>
          <ListBox>
            <ListMain>
              <ListHead>
                <HeadCell>Nom</HeadCell>
                <HeadCell $sep>Touche de racc...</HeadCell>
              </ListHead>
              {categories.map((c, i) => (
                <CatRow key={c}>
                  <CatCheck />
                  <CatSwatch $blue={i === 0} />
                  <CatName $sel={i === 7}>{c}</CatName>
                </CatRow>
              ))}
            </ListMain>
            <ListScroll>
              <ArrowCell><svg width="8" height="5" viewBox="0 0 8 5"><path d="M.5 4.500L4 1l3.500 3.500" fill="none" stroke="#444" strokeWidth="1.300" /></svg></ArrowCell>
              <ListThumb />
              <ArrowCell $end><svg width="8" height="5" viewBox="0 0 8 5"><path d="M.5.5L4 4 7.500.5" fill="none" stroke="#444" strokeWidth="1.300" /></svg></ArrowCell>
            </ListScroll>
          </ListBox>
          <SideCol>
            <DlgBtn $mb={9}>Nouveau...</DlgBtn>
            <DlgBtn $mb={9}>Renommer</DlgBtn>
            <DlgBtn>Supprimer</DlgBtn>
            <FieldLabel $m="4px 0 3px -1px">Couleur :</FieldLabel>
            <ColorSelect><ColorChip /><ColorArrow><Chev c="#555" w={10} /></ColorArrow></ColorSelect>
            <FieldLabel $m="3px 0 4px -1px">Touche de raccourci :</FieldLabel>
            <KeySelect>(Aucune)<Chev c="#333" w={10} /></KeySelect>
          </SideCol>
        </DialogBody>
        <DialogFooter>
          <DlgBtn $w={73} $primary>OK</DlgBtn>
          <DlgBtn $w={73}>Annuler</DlgBtn>
        </DialogFooter>
      </Dialog>
    </Page>
  );
}
